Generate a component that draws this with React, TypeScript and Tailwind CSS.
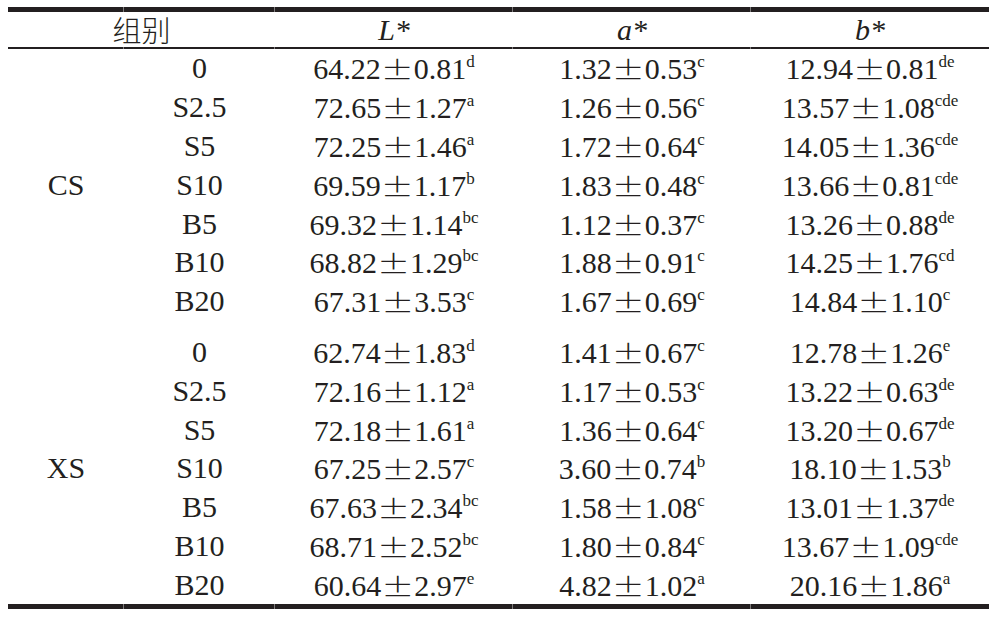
const COLS = "grid grid-cols-[116px_151px_238px_238px_238px]";

// value, sd, letters
type V = [string, string, string];
const groups: { label: string; rows: { name: string; v: V[] }[] }[] = [
  {
    label: "CS",
    rows: [
      { name: "0", v: [["64.22", "0.81", "d"], ["1.32", "0.53", "c"], ["12.94", "0.81", "de"]] },
      { name: "S2.5", v: [["72.65", "1.27", "a"], ["1.26", "0.56", "c"], ["13.57", "1.08", "cde"]] },
      { name: "S5", v: [["72.25", "1.46", "a"], ["1.72", "0.64", "c"], ["14.05", "1.36", "cde"]] },
      { name: "S10", v: [["69.59", "1.17", "b"], ["1.83", "0.48", "c"], ["13.66", "0.81", "cde"]] },
      { name: "B5", v: [["69.32", "1.14", "bc"], ["1.12", "0.37", "c"], ["13.26", "0.88", "de"]] },
      { name: "B10", v: [["68.82", "1.29", "bc"], ["1.88", "0.91", "c"], ["14.25", "1.76", "cd"]] },
      { name: "B20", v: [["67.31", "3.53", "c"], ["1.67", "0.69", "c"], ["14.84", "1.10", "c"]] },
    ],
  },
  {
    label: "XS",
    rows: [
      { name: "0", v: [["62.74", "1.83", "d"], ["1.41", "0.67", "c"], ["12.78", "1.26", "e"]] },
      { name: "S2.5", v: [["72.16", "1.12", "a"], ["1.17", "0.53", "c"], ["13.22", "0.63", "de"]] },
      { name: "S5", v: [["72.18", "1.61", "a"], ["1.36", "0.64", "c"], ["13.20", "0.67", "de"]] },
      { name: "S10", v: [["67.25", "2.57", "c"], ["3.60", "0.74", "b"], ["18.10", "1.53", "b"]] },
      { name: "B5", v: [["67.63", "2.34", "bc"], ["1.58", "1.08", "c"], ["13.01", "1.37", "de"]] },
      { name: "B10", v: [["68.71", "2.52", "bc"], ["1.80", "0.84", "c"], ["13.67", "1.09", "cde"]] },
      { name: "B20", v: [["60.64", "2.97", "e"], ["4.82", "1.02", "a"], ["20.16", "1.86", "a"]] },
    ],
  },
];

function Rule({ h }: { h: string }) {
  return (
    <div className={`flex ${h}`}>
      <div className="w-[116px] bg-[#231f20] border-r border-[#7d7a7a]" />
      <div className="w-[151px] bg-[#231f20] border-r border-[#7d7a7a]" />
      <div className="w-[238px] bg-[#231f20] border-r border-[#7d7a7a]" />
      <div className="w-[238px] bg-[#231f20] border-r border-[#7d7a7a]" />
      <div className="w-[238px] bg-[#231f20]" />
    </div>
  );
}

function Value({ v }: { v: V }) {
  return (
    <div className="text-center whitespace-nowrap h-[30px]">
      {v[0]}
      <span className="inline-block w-[33px] -mt-[8px] -mb-[4px] text-center align-baseline font-[Noto_Sans_CJK_SC,sans-serif] font-light text-[33px] leading-none scale-y-[0.8] origin-bottom">±</span>
      {v[1]}
      <sup className="text-[17px] leading-none align-[12px] top-0">{v[2]}</sup>
    </div>
  );
}

export default function App() {
  return (
    <div className="min-h-screen bg-white pl-[8px] pt-[7px] text-[#231f20] font-[Liberation_Serif,Times_New_Roman,serif] text-[30px]">
      <div className="w-[981px]">
        <Rule h="h-[5px]" />
        <div className={`${COLS} h-[35px] items-center leading-none`}>
          <div className="col-span-2 text-center font-[Noto_Sans_CJK_SC,sans-serif] font-light text-[29px]">组别</div>
          <div className="text-center italic">L*</div>
          <div className="text-center italic">a*</div>
          <div className="text-center italic">b*</div>
        </div>
        <Rule h="h-[2px]" />
        <div className="flex flex-col gap-[12px]">
          {groups.map((g) => (
            <div key={g.label} className={`${COLS} grid-rows-[repeat(7,38.8px)] leading-none`}>
              <div className="row-span-7 flex items-center justify-center">{g.label}</div>
              {g.rows.map((r) => (
                <div key={r.name} className="col-span-4 grid grid-cols-[151px_238px_238px_238px] items-center">
                  <div className="text-center h-[30px]">{r.name}</div>
                  <Value v={r.v[0]} />
                  <Value v={r.v[1]} />
                  <Value v={r.v[2]} />
                </div>
              ))}
            </div>
          ))}
        </div>
        <Rule h="h-[5px]" />
      </div>
    </div>
  );
}
